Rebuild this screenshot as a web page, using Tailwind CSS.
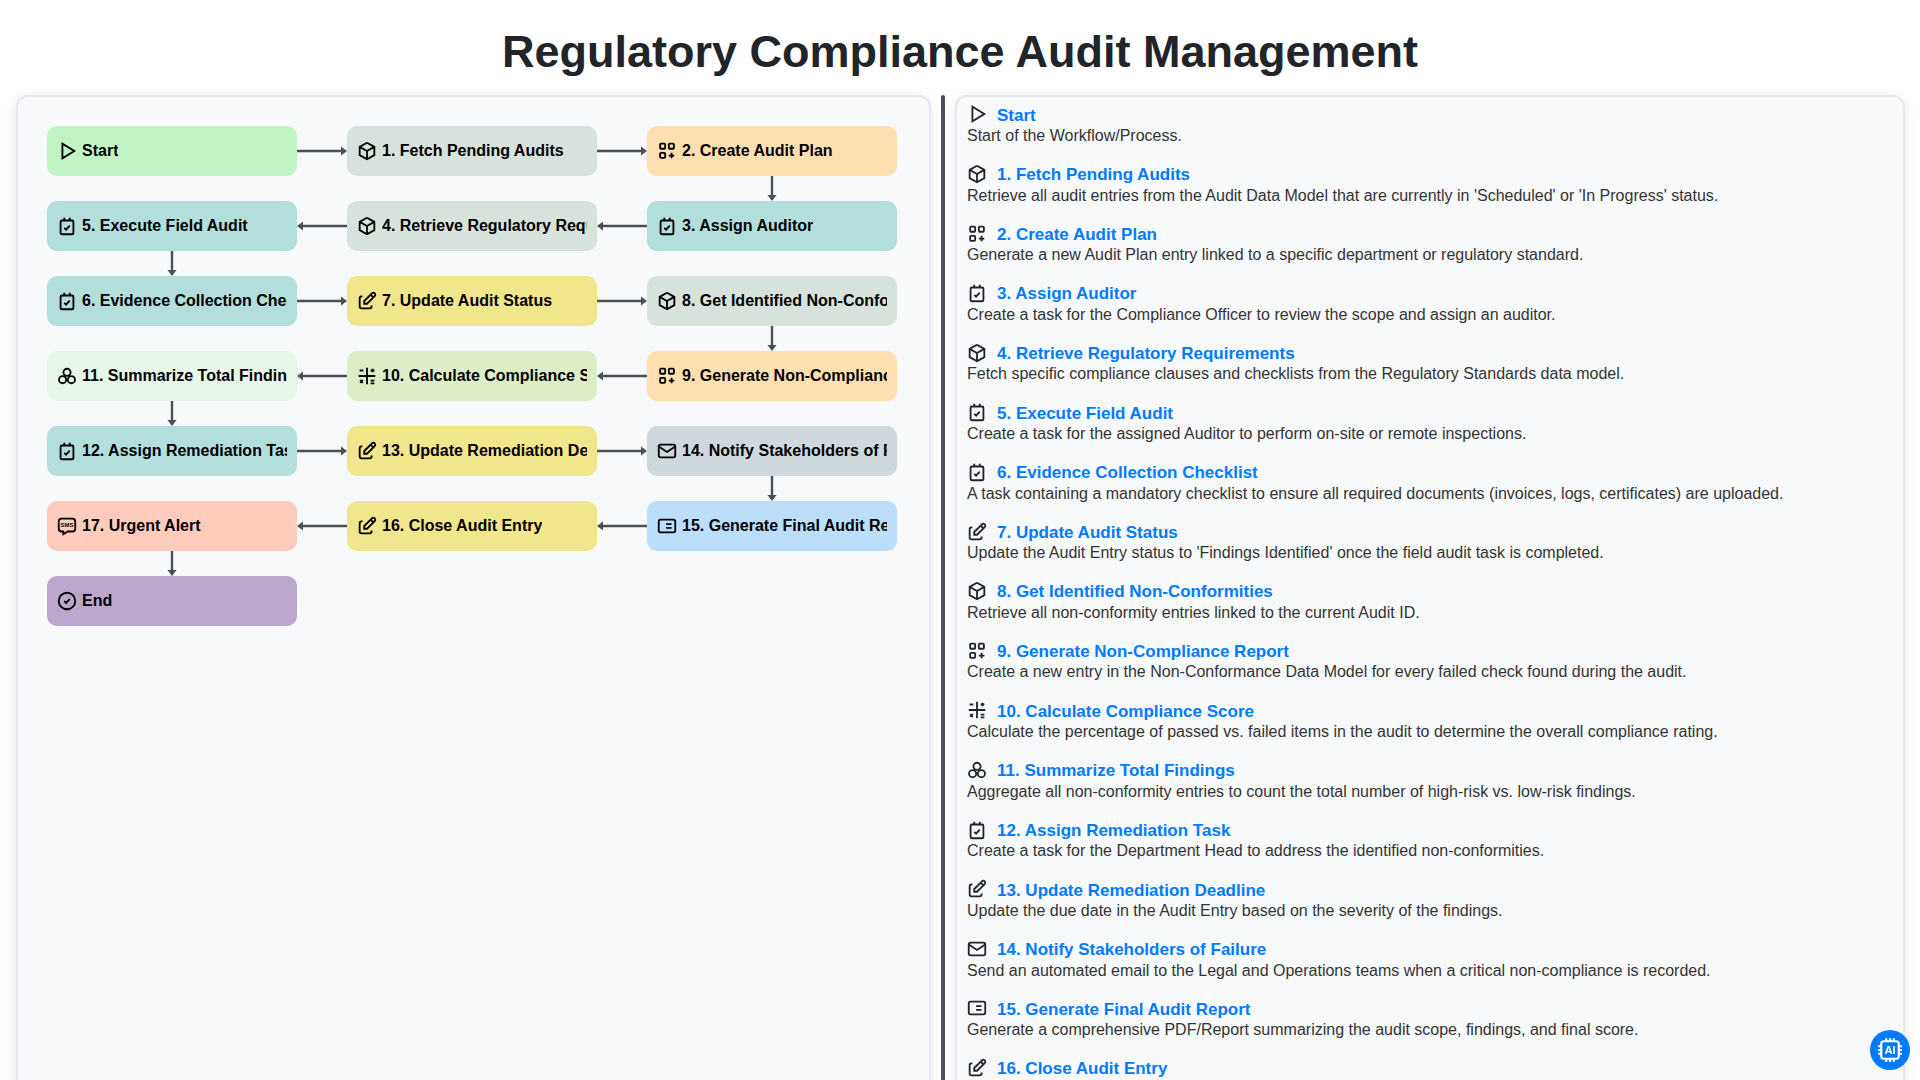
<!DOCTYPE html>
<html lang="en">
<head>
<meta charset="utf-8">
<title>Regulatory Compliance Audit Management</title>
<script src="https://cdn.jsdelivr.net/npm/@tailwindcss/browser@4"></script>
</head>
<body class="h-screen overflow-hidden bg-white font-['Liberation_Sans',Arial,sans-serif] text-[#212529]">
<svg class="hidden" width="0" height="0">
  <defs>
    <symbol id="i-play" viewBox="0 0 24 24"><path d="M7 4v16l13-8z"/></symbol>
    <symbol id="i-box" viewBox="0 0 24 24"><path d="M12 3l8 4.5v9l-8 4.5l-8-4.5v-9l8-4.5M12 12l8-4.5M12 12v9M12 12l-8-4.5"/></symbol>
    <symbol id="i-apps" viewBox="0 0 24 24"><rect x="4.5" y="4" width="5.5" height="5.5" rx="1"/><rect x="14" y="4" width="5.5" height="5.5" rx="1"/><rect x="4.5" y="14" width="5.5" height="5.5" rx="1"/><path d="M14 17h6M17 14v6"/></symbol>
    <symbol id="i-task" viewBox="0 0 24 24"><rect x="5" y="6" width="14" height="15" rx="1.5"/><path d="M9 3v3M15 3v3M9 14l2 2l4-4.5"/></symbol>
    <symbol id="i-edit" viewBox="0 0 24 24"><path d="M7 7h-1a2 2 0 0 0-2 2v9a2 2 0 0 0 2 2h9a2 2 0 0 0 2-2v-1M20.385 6.585a2.1 2.1 0 0 0-2.97-2.97l-8.415 8.385v3h3l8.385-8.415zM16 5l3 3"/></symbol>
    <symbol id="i-math" viewBox="0 0 24 24"><path d="M3 12h18M12 3v18M4 6h4M18 4v4M16 6h4M4.5 16.5l3 3M7.5 16.5l-3 3M16 17h4M16 20h4"/></symbol>
    <symbol id="i-circles" viewBox="0 0 24 24"><circle cx="12" cy="8" r="3.9"/><circle cx="7.2" cy="16" r="3.9"/><circle cx="16.8" cy="16" r="3.9"/></symbol>
    <symbol id="i-mail" viewBox="0 0 24 24"><rect x="3" y="5" width="18" height="14" rx="2"/><path d="M3 7l9 6l9-6"/></symbol>
    <symbol id="i-form" viewBox="0 0 24 24"><rect x="3" y="5" width="18" height="14" rx="2"/><path d="M7 10h.01M7 14h.01M11 10h6M11 14h6"/></symbol>
    <symbol id="i-sms" viewBox="0 0 24 24"><path d="M18 4a3 3 0 0 1 3 3v8a3 3 0 0 1-3 3h-5l-5 3v-3h-2a3 3 0 0 1-3-3v-8a3 3 0 0 1 3-3z"/><text x="12" y="13.3" text-anchor="middle" font-size="6.5" font-weight="700" fill="currentColor" stroke="none" font-family="Liberation Sans">SMS</text></symbol>
    <symbol id="i-check" viewBox="0 0 24 24"><circle cx="12" cy="12" r="9"/><path d="M9 12l2 2l4-4"/></symbol>
    <symbol id="a-right" viewBox="0 0 50 10"><path d="M0 5h45" fill="none" stroke="#495057" stroke-width="2.4"/><path d="M44 .5l6 4.5l-6 4.5z" fill="#495057"/></symbol>
    <symbol id="a-left" viewBox="0 0 50 10"><path d="M5 5h45" fill="none" stroke="#495057" stroke-width="2.4"/><path d="M6 .5l-6 4.5l6 4.5z" fill="#495057"/></symbol>
    <symbol id="a-down" viewBox="0 0 10 25"><path d="M5 0v20" fill="none" stroke="#495057" stroke-width="2.4"/><path d="M.5 19l4.5 6l4.5-6z" fill="#495057"/></symbol>
  </defs>
</svg>

<h1 class="h-[95px] pt-[7px] flex items-center justify-center text-[45px] leading-none font-bold text-[#212529]">Regulatory Compliance Audit Management</h1>

<main class="flex pl-4 pr-[15px] h-[1000px]">
  <section class="w-[915px] shrink-0 bg-[#f8f9fa] border-2 border-[#e6e8ee] rounded-xl shadow-[0_4px_14px_rgba(0,0,0,0.1)] p-[29px]">
    <div class="grid grid-cols-[250px_250px_250px] auto-rows-[50px] gap-x-[50px] gap-y-[25px] text-base font-bold text-black">
      <div class="relative flex items-center rounded-[10px] px-[10px] bg-[#c1f4c5]"><svg class="w-[22px] h-[22px] -ml-px mr-[4px] shrink-0 fill-none stroke-current stroke-2"><use href="#i-play"/></svg><span class="overflow-hidden whitespace-nowrap">Start</span><svg class="absolute left-full top-[20px] w-[50px] h-[10px]"><use href="#a-right"/></svg></div>
      <div class="relative flex items-center rounded-[10px] px-[10px] bg-[#d8e2dc]"><svg class="w-[22px] h-[22px] -ml-px mr-[4px] shrink-0 fill-none stroke-current stroke-2"><use href="#i-box"/></svg><span class="overflow-hidden whitespace-nowrap">1. Fetch Pending Audits</span><svg class="absolute left-full top-[20px] w-[50px] h-[10px]"><use href="#a-right"/></svg></div>
      <div class="relative flex items-center rounded-[10px] px-[10px] bg-[#ffdfb0]"><svg class="w-[22px] h-[22px] -ml-px mr-[4px] shrink-0 fill-none stroke-current stroke-2"><use href="#i-apps"/></svg><span class="overflow-hidden whitespace-nowrap">2. Create Audit Plan</span><svg class="absolute top-full left-[120px] w-[10px] h-[25px]"><use href="#a-down"/></svg></div>

      <div class="relative flex items-center rounded-[10px] px-[10px] bg-[#b2dfdb]"><svg class="w-[22px] h-[22px] -ml-px mr-[4px] shrink-0 fill-none stroke-current stroke-2"><use href="#i-task"/></svg><span class="overflow-hidden whitespace-nowrap">5. Execute Field Audit</span><svg class="absolute top-full left-[120px] w-[10px] h-[25px]"><use href="#a-down"/></svg></div>
      <div class="relative flex items-center rounded-[10px] px-[10px] bg-[#d8e2dc]"><svg class="w-[22px] h-[22px] -ml-px mr-[4px] shrink-0 fill-none stroke-current stroke-2"><use href="#i-box"/></svg><span class="overflow-hidden whitespace-nowrap">4. Retrieve Regulatory Requirements</span><svg class="absolute right-full top-[20px] w-[50px] h-[10px]"><use href="#a-left"/></svg></div>
      <div class="relative flex items-center rounded-[10px] px-[10px] bg-[#b2dfdb]"><svg class="w-[22px] h-[22px] -ml-px mr-[4px] shrink-0 fill-none stroke-current stroke-2"><use href="#i-task"/></svg><span class="overflow-hidden whitespace-nowrap">3. Assign Auditor</span><svg class="absolute right-full top-[20px] w-[50px] h-[10px]"><use href="#a-left"/></svg></div>

      <div class="relative flex items-center rounded-[10px] px-[10px] bg-[#b2dfdb]"><svg class="w-[22px] h-[22px] -ml-px mr-[4px] shrink-0 fill-none stroke-current stroke-2"><use href="#i-task"/></svg><span class="overflow-hidden whitespace-nowrap">6. Evidence Collection Checklist</span><svg class="absolute left-full top-[20px] w-[50px] h-[10px]"><use href="#a-right"/></svg></div>
      <div class="relative flex items-center rounded-[10px] px-[10px] bg-[#f0e68c]"><svg class="w-[22px] h-[22px] -ml-px mr-[4px] shrink-0 fill-none stroke-current stroke-2"><use href="#i-edit"/></svg><span class="overflow-hidden whitespace-nowrap">7. Update Audit Status</span><svg class="absolute left-full top-[20px] w-[50px] h-[10px]"><use href="#a-right"/></svg></div>
      <div class="relative flex items-center rounded-[10px] px-[10px] bg-[#d8e2dc]"><svg class="w-[22px] h-[22px] -ml-px mr-[4px] shrink-0 fill-none stroke-current stroke-2"><use href="#i-box"/></svg><span class="overflow-hidden whitespace-nowrap">8. Get Identified Non-Conformities</span><svg class="absolute top-full left-[120px] w-[10px] h-[25px]"><use href="#a-down"/></svg></div>

      <div class="relative flex items-center rounded-[10px] px-[10px] bg-[#e8f5e9]"><svg class="w-[22px] h-[22px] -ml-px mr-[4px] shrink-0 fill-none stroke-current stroke-2"><use href="#i-circles"/></svg><span class="overflow-hidden whitespace-nowrap">11. Summarize Total Findings</span><svg class="absolute top-full left-[120px] w-[10px] h-[25px]"><use href="#a-down"/></svg></div>
      <div class="relative flex items-center rounded-[10px] px-[10px] bg-[#dcedc8]"><svg class="w-[22px] h-[22px] -ml-px mr-[4px] shrink-0 fill-none stroke-current stroke-2"><use href="#i-math"/></svg><span class="overflow-hidden whitespace-nowrap">10. Calculate Compliance Score</span><svg class="absolute right-full top-[20px] w-[50px] h-[10px]"><use href="#a-left"/></svg></div>
      <div class="relative flex items-center rounded-[10px] px-[10px] bg-[#ffdfb0]"><svg class="w-[22px] h-[22px] -ml-px mr-[4px] shrink-0 fill-none stroke-current stroke-2"><use href="#i-apps"/></svg><span class="overflow-hidden whitespace-nowrap">9. Generate Non-Compliance Report</span><svg class="absolute right-full top-[20px] w-[50px] h-[10px]"><use href="#a-left"/></svg></div>

      <div class="relative flex items-center rounded-[10px] px-[10px] bg-[#b2dfdb]"><svg class="w-[22px] h-[22px] -ml-px mr-[4px] shrink-0 fill-none stroke-current stroke-2"><use href="#i-task"/></svg><span class="overflow-hidden whitespace-nowrap">12. Assign Remediation Task</span><svg class="absolute left-full top-[20px] w-[50px] h-[10px]"><use href="#a-right"/></svg></div>
      <div class="relative flex items-center rounded-[10px] px-[10px] bg-[#f0e68c]"><svg class="w-[22px] h-[22px] -ml-px mr-[4px] shrink-0 fill-none stroke-current stroke-2"><use href="#i-edit"/></svg><span class="overflow-hidden whitespace-nowrap">13. Update Remediation Deadline</span><svg class="absolute left-full top-[20px] w-[50px] h-[10px]"><use href="#a-right"/></svg></div>
      <div class="relative flex items-center rounded-[10px] px-[10px] bg-[#cfd8dc]"><svg class="w-[22px] h-[22px] -ml-px mr-[4px] shrink-0 fill-none stroke-current stroke-2"><use href="#i-mail"/></svg><span class="overflow-hidden whitespace-nowrap">14. Notify Stakeholders of Failure</span><svg class="absolute top-full left-[120px] w-[10px] h-[25px]"><use href="#a-down"/></svg></div>

      <div class="relative flex items-center rounded-[10px] px-[10px] bg-[#ffccbc]"><svg class="w-[22px] h-[22px] -ml-px mr-[4px] shrink-0 fill-none stroke-current stroke-2"><use href="#i-sms"/></svg><span class="overflow-hidden whitespace-nowrap">17. Urgent Alert</span><svg class="absolute top-full left-[120px] w-[10px] h-[25px]"><use href="#a-down"/></svg></div>
      <div class="relative flex items-center rounded-[10px] px-[10px] bg-[#f0e68c]"><svg class="w-[22px] h-[22px] -ml-px mr-[4px] shrink-0 fill-none stroke-current stroke-2"><use href="#i-edit"/></svg><span class="overflow-hidden whitespace-nowrap">16. Close Audit Entry</span><svg class="absolute right-full top-[20px] w-[50px] h-[10px]"><use href="#a-left"/></svg></div>
      <div class="relative flex items-center rounded-[10px] px-[10px] bg-[#bbdefb]"><svg class="w-[22px] h-[22px] -ml-px mr-[4px] shrink-0 fill-none stroke-current stroke-2"><use href="#i-form"/></svg><span class="overflow-hidden whitespace-nowrap">15. Generate Final Audit Report</span><svg class="absolute right-full top-[20px] w-[50px] h-[10px]"><use href="#a-left"/></svg></div>

      <div class="relative flex items-center rounded-[10px] px-[10px] bg-[#bba6cc]"><svg class="w-[22px] h-[22px] -ml-px mr-[4px] shrink-0 fill-none stroke-current stroke-2"><use href="#i-check"/></svg><span class="overflow-hidden whitespace-nowrap">End</span></div>
    </div>
  </section>

  <div class="w-[4px] ml-[10px] mr-[10px] shrink-0 bg-[#4a4e5e] rounded-t-sm"></div>

  <section class="flex-1 bg-[#f8f9fa] border-2 border-[#e6e8ee] rounded-xl shadow-[0_4px_14px_rgba(0,0,0,0.1)] pt-[8.6px] px-[10px] overflow-hidden">
    <ul class="flex flex-col gap-5 text-base leading-[19.2px] text-[#333]">
      <li><div class="flex items-center text-[17px] leading-[20.4px] font-bold text-[#007bff]"><svg class="w-[22px] h-[22px] -ml-px -mt-[4px] -mb-px mr-[9px] shrink-0 fill-none stroke-[#212529] stroke-2"><use href="#i-play"/></svg>Start</div><p>Start of the Workflow/Process.</p></li>
      <li><div class="flex items-center text-[17px] leading-[20.4px] font-bold text-[#007bff]"><svg class="w-[22px] h-[22px] -ml-px -mt-[4px] -mb-px mr-[9px] shrink-0 fill-none stroke-[#212529] stroke-2"><use href="#i-box"/></svg>1. Fetch Pending Audits</div><p>Retrieve all audit entries from the Audit Data Model that are currently in 'Scheduled' or 'In Progress' status.</p></li>
      <li><div class="flex items-center text-[17px] leading-[20.4px] font-bold text-[#007bff]"><svg class="w-[22px] h-[22px] -ml-px -mt-[4px] -mb-px mr-[9px] shrink-0 fill-none stroke-[#212529] stroke-2"><use href="#i-apps"/></svg>2. Create Audit Plan</div><p>Generate a new Audit Plan entry linked to a specific department or regulatory standard.</p></li>
      <li><div class="flex items-center text-[17px] leading-[20.4px] font-bold text-[#007bff]"><svg class="w-[22px] h-[22px] -ml-px -mt-[4px] -mb-px mr-[9px] shrink-0 fill-none stroke-[#212529] stroke-2"><use href="#i-task"/></svg>3. Assign Auditor</div><p>Create a task for the Compliance Officer to review the scope and assign an auditor.</p></li>
      <li><div class="flex items-center text-[17px] leading-[20.4px] font-bold text-[#007bff]"><svg class="w-[22px] h-[22px] -ml-px -mt-[4px] -mb-px mr-[9px] shrink-0 fill-none stroke-[#212529] stroke-2"><use href="#i-box"/></svg>4. Retrieve Regulatory Requirements</div><p>Fetch specific compliance clauses and checklists from the Regulatory Standards data model.</p></li>
      <li><div class="flex items-center text-[17px] leading-[20.4px] font-bold text-[#007bff]"><svg class="w-[22px] h-[22px] -ml-px -mt-[4px] -mb-px mr-[9px] shrink-0 fill-none stroke-[#212529] stroke-2"><use href="#i-task"/></svg>5. Execute Field Audit</div><p>Create a task for the assigned Auditor to perform on-site or remote inspections.</p></li>
      <li><div class="flex items-center text-[17px] leading-[20.4px] font-bold text-[#007bff]"><svg class="w-[22px] h-[22px] -ml-px -mt-[4px] -mb-px mr-[9px] shrink-0 fill-none stroke-[#212529] stroke-2"><use href="#i-task"/></svg>6. Evidence Collection Checklist</div><p>A task containing a mandatory checklist to ensure all required documents (invoices, logs, certificates) are uploaded.</p></li>
      <li><div class="flex items-center text-[17px] leading-[20.4px] font-bold text-[#007bff]"><svg class="w-[22px] h-[22px] -ml-px -mt-[4px] -mb-px mr-[9px] shrink-0 fill-none stroke-[#212529] stroke-2"><use href="#i-edit"/></svg>7. Update Audit Status</div><p>Update the Audit Entry status to 'Findings Identified' once the field audit task is completed.</p></li>
      <li><div class="flex items-center text-[17px] leading-[20.4px] font-bold text-[#007bff]"><svg class="w-[22px] h-[22px] -ml-px -mt-[4px] -mb-px mr-[9px] shrink-0 fill-none stroke-[#212529] stroke-2"><use href="#i-box"/></svg>8. Get Identified Non-Conformities</div><p>Retrieve all non-conformity entries linked to the current Audit ID.</p></li>
      <li><div class="flex items-center text-[17px] leading-[20.4px] font-bold text-[#007bff]"><svg class="w-[22px] h-[22px] -ml-px -mt-[4px] -mb-px mr-[9px] shrink-0 fill-none stroke-[#212529] stroke-2"><use href="#i-apps"/></svg>9. Generate Non-Compliance Report</div><p>Create a new entry in the Non-Conformance Data Model for every failed check found during the audit.</p></li>
      <li><div class="flex items-center text-[17px] leading-[20.4px] font-bold text-[#007bff]"><svg class="w-[22px] h-[22px] -ml-px -mt-[4px] -mb-px mr-[9px] shrink-0 fill-none stroke-[#212529] stroke-2"><use href="#i-math"/></svg>10. Calculate Compliance Score</div><p>Calculate the percentage of passed vs. failed items in the audit to determine the overall compliance rating.</p></li>
      <li><div class="flex items-center text-[17px] leading-[20.4px] font-bold text-[#007bff]"><svg class="w-[22px] h-[22px] -ml-px -mt-[4px] -mb-px mr-[9px] shrink-0 fill-none stroke-[#212529] stroke-2"><use href="#i-circles"/></svg>11. Summarize Total Findings</div><p>Aggregate all non-conformity entries to count the total number of high-risk vs. low-risk findings.</p></li>
      <li><div class="flex items-center text-[17px] leading-[20.4px] font-bold text-[#007bff]"><svg class="w-[22px] h-[22px] -ml-px -mt-[4px] -mb-px mr-[9px] shrink-0 fill-none stroke-[#212529] stroke-2"><use href="#i-task"/></svg>12. Assign Remediation Task</div><p>Create a task for the Department Head to address the identified non-conformities.</p></li>
      <li><div class="flex items-center text-[17px] leading-[20.4px] font-bold text-[#007bff]"><svg class="w-[22px] h-[22px] -ml-px -mt-[4px] -mb-px mr-[9px] shrink-0 fill-none stroke-[#212529] stroke-2"><use href="#i-edit"/></svg>13. Update Remediation Deadline</div><p>Update the due date in the Audit Entry based on the severity of the findings.</p></li>
      <li><div class="flex items-center text-[17px] leading-[20.4px] font-bold text-[#007bff]"><svg class="w-[22px] h-[22px] -ml-px -mt-[4px] -mb-px mr-[9px] shrink-0 fill-none stroke-[#212529] stroke-2"><use href="#i-mail"/></svg>14. Notify Stakeholders of Failure</div><p>Send an automated email to the Legal and Operations teams when a critical non-compliance is recorded.</p></li>
      <li><div class="flex items-center text-[17px] leading-[20.4px] font-bold text-[#007bff]"><svg class="w-[22px] h-[22px] -ml-px -mt-[4px] -mb-px mr-[9px] shrink-0 fill-none stroke-[#212529] stroke-2"><use href="#i-form"/></svg>15. Generate Final Audit Report</div><p>Generate a comprehensive PDF/Report summarizing the audit scope, findings, and final score.</p></li>
      <li><div class="flex items-center text-[17px] leading-[20.4px] font-bold text-[#007bff]"><svg class="w-[22px] h-[22px] -ml-px -mt-[4px] -mb-px mr-[9px] shrink-0 fill-none stroke-[#212529] stroke-2"><use href="#i-edit"/></svg>16. Close Audit Entry</div></li>
    </ul>
  </section>
</main>

<button class="fixed right-[10px] bottom-[10px] w-10 h-10 rounded-full bg-[#007bff] flex items-center justify-center text-white">
  <svg class="w-[30px] h-[30px]" viewBox="0 0 24 24" fill="none" stroke="#fff" stroke-width="1.7">
    <rect x="5" y="5" width="14" height="14" rx="2"/>
    <path d="M9 2.5v2.5M12 2.5v2.5M15 2.5v2.5M9 19v2.5M12 19v2.5M15 19v2.5M2.5 9h2.5M2.5 12h2.5M2.5 15h2.5M19 9h2.5M19 12h2.5M19 15h2.5"/>
    <text x="12" y="15.2" text-anchor="middle" font-size="9" font-weight="700" fill="#fff" stroke="none" font-family="Liberation Sans">AI</text>
  </svg>
</button>
</body>
</html>
